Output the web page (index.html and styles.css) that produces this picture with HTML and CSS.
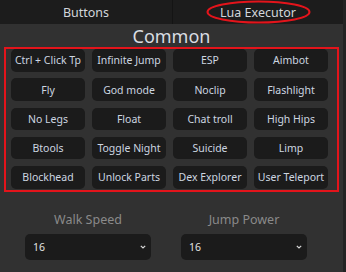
FILE: index.html
```html
<!DOCTYPE html>
<html lang="en">
  <head>
    <meta charset="UTF-8" />
    <meta name="viewport" content="width=device-width, initial-scale=1.0" />
    <title>Common</title>
    <link rel="stylesheet" href="styles.css">
  </head>
  <body>
    <div class="app">
      <div class="main">
        <div class="tabs">
          <div class="tab">Buttons</div>
          <div class="tab tab-marked">
            Lua Executor
            <svg class="mark-ellipse" width="105" height="24" viewBox="0 0 105 24">
              <ellipse cx="52.5" cy="12" rx="51" ry="10.5" fill="none" stroke="#e3141b" stroke-width="2" />
            </svg>
          </div>
        </div>

        <h2 class="heading">Common</h2>

        <div class="panel">
          <div class="grid">
            <button class="cmd">Ctrl + Click Tp</button>
            <button class="cmd">Infinite Jump</button>
            <button class="cmd">ESP</button>
            <button class="cmd">Aimbot</button>
            <button class="cmd">Fly</button>
            <button class="cmd">God mode</button>
            <button class="cmd">Noclip</button>
            <button class="cmd">Flashlight</button>
            <button class="cmd">No Legs</button>
            <button class="cmd">Float</button>
            <button class="cmd">Chat troll</button>
            <button class="cmd">High Hips</button>
            <button class="cmd">Btools</button>
            <button class="cmd">Toggle Night</button>
            <button class="cmd">Suicide</button>
            <button class="cmd">Limp</button>
            <button class="cmd">Blockhead</button>
            <button class="cmd">Unlock Parts</button>
            <button class="cmd">Dex Explorer</button>
            <button class="cmd">User Teleport</button>
          </div>
          <div class="mark-box"></div>
        </div>

        <div class="fields">
          <div class="field">
            <label class="field-label">Walk Speed</label>
            <div class="select-wrap">
              <select class="select">
                <option>16</option>
              </select>
              <svg class="chevron" width="6" height="4" viewBox="0 0 6 4">
                <path d="M0.8 0.8 L3 3 L5.2 0.8" fill="none" stroke="#d8d8d8" stroke-width="1.2" />
              </svg>
            </div>
          </div>
          <div class="field">
            <label class="field-label">Jump Power</label>
            <div class="select-wrap">
              <select class="select">
                <option>16</option>
              </select>
              <svg class="chevron" width="6" height="4" viewBox="0 0 6 4">
                <path d="M0.8 0.8 L3 3 L5.2 0.8" fill="none" stroke="#d8d8d8" stroke-width="1.2" />
              </svg>
            </div>
          </div>
        </div>
      </div>
      <div class="scrollbar"></div>
    </div>
  </body>
</html>
```

FILE: styles.css
```css
html,
body {
  margin: 0;
  height: 100%;
}
body {
  background-color: #313131;
  font-family: "Noto Sans", "DejaVu Sans", sans-serif;
  overflow: hidden;
}
.app {
  display: flex;
  height: 100%;
}
.main {
  flex: 1;
}
.scrollbar {
  width: 3px;
  background-color: #232323;
}
.tabs {
  display: grid;
  grid-template-columns: 172px 1fr;
  gap: 1px;
  height: 24px;
  background-color: #141414;
}
.tab {
  display: flex;
  align-items: center;
  justify-content: center;
  background-color: #1c1c1c;
  color: #d2d6db;
  font-size: 12.5px;
}
.tab-marked {
  position: relative;
}
.mark-ellipse {
  position: absolute;
  left: 33px;
  top: 0;
}
.heading {
  margin: 0;
  height: 23px;
  line-height: 24px;
  text-align: center;
  font-size: 18px;
  font-weight: normal;
  color: #d9dde2;
}
.panel {
  position: relative;
  padding: 2px 0 0 11px;
}
.grid {
  display: grid;
  grid-template-columns: repeat(4, 74px);
  grid-auto-rows: 22.5px;
  column-gap: 7px;
  row-gap: 6.8px;
}
.cmd {
  border: none;
  border-radius: 5px;
  background-color: #1b1b1b;
  color: #cdd6e0;
  font-family: inherit;
  font-size: 10.5px;
  padding: 0;
  white-space: nowrap;
}
.mark-box {
  position: absolute;
  left: 4px;
  top: 0;
  width: 331px;
  height: 141px;
  border: 2px solid #e3141b;
}
.fields {
  display: flex;
  gap: 30px;
  padding: 22px 0 0 25px;
}
.field {
  width: 126px;
  display: flex;
  flex-direction: column;
  align-items: center;
  gap: 6px;
}
.field-label {
  font-size: 12.5px;
  color: #8a8a8a;
}
.select-wrap {
  position: relative;
  width: 100%;
}
.select {
  appearance: none;
  width: 100%;
  height: 26px;
  border: none;
  border-radius: 5px;
  padding: 0 0 0 8px;
  background-color: #1b1b1b;
  color: #e2e2e2;
  font-family: inherit;
  font-size: 10.5px;
}
.chevron {
  position: absolute;
  right: 5px;
  top: 11px;
}
```
